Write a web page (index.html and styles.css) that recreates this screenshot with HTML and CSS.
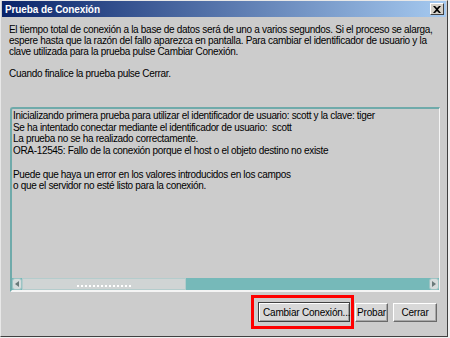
FILE: index.html
```html
<!DOCTYPE html>
<html lang="es">
<head>
  <meta charset="UTF-8">
  <title>Prueba de Conexión</title>
  <link rel="stylesheet" href="styles.css">
</head>
<body>
  <div class="dialog">
    <div class="titlebar">
      <span class="title">Prueba de Conexión</span>
      <span class="close">
        <svg width="8" height="7" viewBox="0 0 8 7"><path d="M0 0h2l2 2 2-2h2L5 3.5 8 7H6L4 5 2 7H0l3-3.5z" fill="#000"/></svg>
      </span>
    </div>
    <div class="content">
      <p class="intro">El tiempo total de conexión a la base de datos será de uno a varios segundos. Si el proceso se alarga,<br>espere hasta que la razón del fallo aparezca en pantalla. Para cambiar el identificador de usuario y la<br>clave utilizada para la prueba pulse Cambiar Conexión.<br><br>Cuando finalice la prueba pulse Cerrar.</p>
      <div class="log">
        <div class="log-text">Inicializando primera prueba para utilizar el identificador de usuario: scott y la clave: tiger<br>Se ha intentado conectar mediante el identificador de usuario:&nbsp; scott<br>La prueba no se ha realizado correctamente.<br>ORA-12545: Fallo de la conexión porque el host o el objeto destino no existe<br><br>Puede que haya un error en los valores introducidos en los campos<br>o que el servidor no esté listo para la conexión.</div>
        <div class="hscroll">
          <span class="arrow-btn">
            <svg width="4" height="6" viewBox="0 0 4 6"><path d="M4 0v6L0 3z" fill="#6a7a7a"/></svg>
          </span>
          <span class="thumb"><span class="grip"></span></span>
          <span class="track"></span>
          <span class="arrow-btn">
            <svg width="4" height="6" viewBox="0 0 4 6"><path d="M0 0v6l4-3z" fill="#6a7a7a"/></svg>
          </span>
        </div>
      </div>
      <div class="buttons">
        <span class="highlight"><button class="btn default">Cambiar Conexión...</button></span>
        <button class="btn probar">Probar</button>
        <button class="btn cerrar">Cerrar</button>
      </div>
    </div>
  </div>
</body>
</html>
```

FILE: styles.css
```css
html, body {
  margin: 0;
  padding: 0;
  background: #f0f0f0;
}
.dialog {
  width: 448px;
  height: 337px;
  box-sizing: border-box;
  background: #cccccc;
  border-top: 1px solid #e8e8e8;
  border-left: 1px solid #e8e8e8;
  border-right: 1px solid #404040;
  border-bottom: 1px solid #404040;
  font-family: "Liberation Sans", Arial, sans-serif;
  display: flex;
  flex-direction: column;
}
.titlebar {
  height: 16px;
  margin: 0 1px;
  background: linear-gradient(to right, #0a246a, #a6caf0);
  display: flex;
  align-items: center;
  justify-content: space-between;
  padding: 0 2px 0 3px;
}
.title {
  color: #fff;
  font-weight: bold;
  font-size: 10px;
  letter-spacing: -0.1px;
}
.close {
  width: 14px;
  height: 12px;
  box-sizing: border-box;
  background: #d4d0c8;
  border: 1px solid;
  border-color: #fff #404040 #404040 #fff;
  display: flex;
  align-items: center;
  justify-content: center;
}
.content {
  flex: 1;
  padding: 7px 7px 0 8px;
  display: flex;
  flex-direction: column;
}
.intro {
  margin: 0;
  font-size: 10px;
  line-height: 11px;
  letter-spacing: -0.3px;
  color: #000;
}
.log {
  margin-top: 28px;
  margin-left: 1px;
  width: 430px;
  height: 185px;
  box-sizing: border-box;
  border-top: 2px solid #6faaaa;
  border-left: 2px solid #6faaaa;
  border-right: 1px solid #f4f4f4;
  border-bottom: 2px solid #f4f4f4;
  border-top-left-radius: 3px;
  display: flex;
  flex-direction: column;
}
.log-text {
  flex: 1;
  padding: 1px 0 0 1px;
  font-size: 10px;
  line-height: 11.7px;
  letter-spacing: -0.33px;
  color: #000;
}
.hscroll {
  height: 12px;
  display: flex;
  background: #76b9b9;
}
.arrow-btn {
  width: 10px;
  box-sizing: border-box;
  background: #d6dcdc;
  border: 1px solid #9cc4c4;
  border-radius: 3px;
  display: flex;
  align-items: center;
  justify-content: center;
}
.thumb {
  width: 164px;
  box-sizing: border-box;
  background: #d0d4d4;
  border: 1px solid #b4cccc;
  display: flex;
  align-items: center;
  justify-content: center;
}
.grip {
  width: 56px;
  height: 4px;
  margin-top: 3px;
  background-image: radial-gradient(circle, #ffffff 0.8px, transparent 1px);
  background-size: 4px 4px;
}
.track {
  flex: 1;
}
.buttons {
  margin-top: 3px;
  padding-right: 3px;
  display: flex;
  justify-content: flex-end;
  align-items: center;
  gap: 5px;
}
.highlight {
  display: flex;
  border: 3px solid #ff0000;
  padding: 4px 1px 4px 4px;
  margin-right: -4px;
}
.btn {
  height: 19px;
  margin: 0;
  padding: 0 4px;
  white-space: nowrap;
  font-family: "Liberation Sans", Arial, sans-serif;
  font-size: 10px;
  letter-spacing: -0.2px;
  color: #000;
  background: #d8d8d8;
  border: 1px solid;
  border-color: #ffffff #6a6a6a #6a6a6a #ffffff;
  box-shadow: inset -1px -1px 0 #a8a8a8;
}
.btn.default {
  width: 92px;
  height: 20px;
  border-color: #404040;
  box-shadow: inset 1px 1px 0 #fff, inset -1px -1px 0 #a0a0a0;
}
.probar {
  width: 33px;
  padding: 0;
}
.cerrar {
  width: 44px;
}
```
